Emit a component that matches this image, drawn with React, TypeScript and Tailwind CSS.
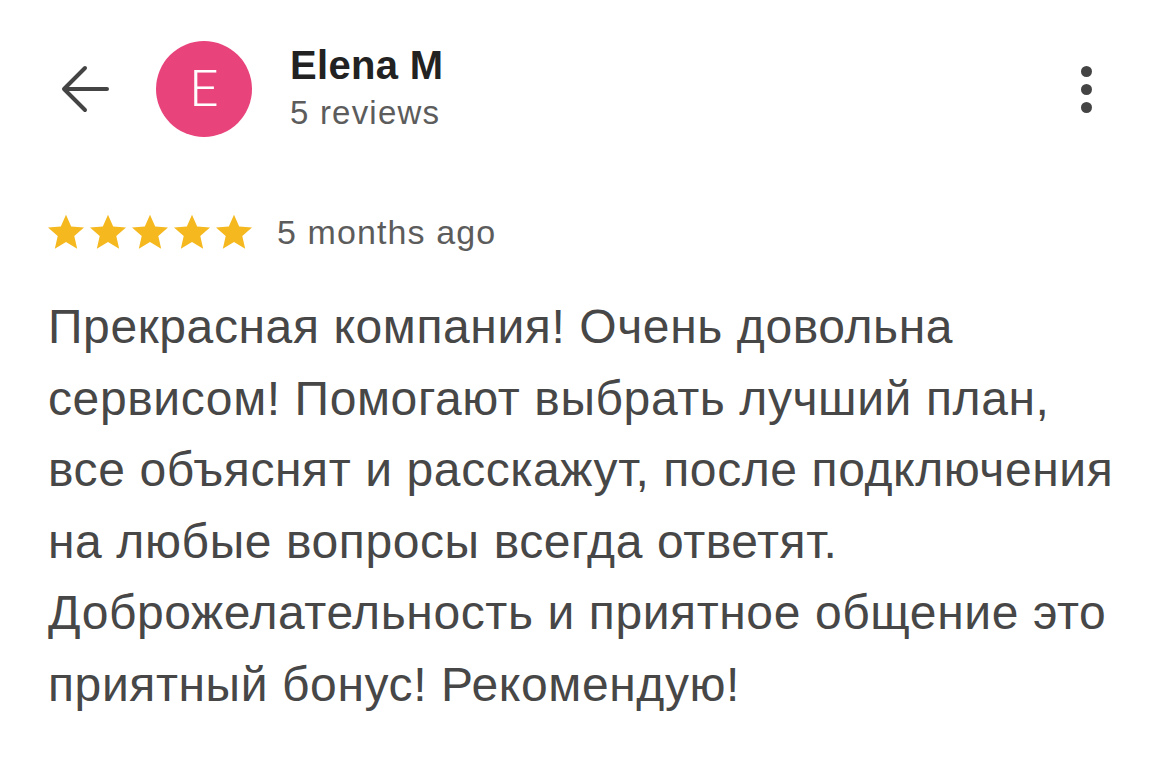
function Star() {
  return (
    <svg viewBox="2.4 2.4 19.2 18.4" className="w-[36px] h-[35px]">
      <path
        d="M12 2.6l2.76 6.3 6.84.62-5.18 4.52 1.54 6.7L12 17.2l-5.96 3.54 1.54-6.7L2.4 9.52l6.84-.62z"
        fill="#f5b81e"
      />
    </svg>
  );
}

function BackArrow() {
  return (
    <svg viewBox="0 0 48 48" className="w-[48px] h-[48px]" fill="none" stroke="#444444" strokeWidth={4} strokeLinecap="round" strokeLinejoin="round">
      <path d="M46 24H4M24 3L3 24l21 21" />
    </svg>
  );
}

export default function App() {
  const text =
    'Прекрасная компания! Очень довольна сервисом! Помогают выбрать лучший план, все объяснят и расскажут, после подключения на любые вопросы всегда ответят. Доброжелательность и приятное общение это приятный бонус! Рекомендую!';

  return (
    <div className="w-[1169px] h-[763px] bg-white font-['Liberation_Sans',Arial,sans-serif] overflow-hidden">
      {/* Header */}
      <div className="flex items-center h-[96px] mt-[41px] pl-[61px] pr-[77px]">
        <BackArrow />
        <div className="ml-[47px] w-[96px] h-[96px] rounded-full bg-[#e8437a] flex items-center justify-center">
          <span className="text-white text-[50px] font-['Roboto',sans-serif] font-light leading-none">E</span>
        </div>
        <div className="ml-[38px] self-start mt-[4px] flex flex-col">
          <span className="text-[40px] font-bold text-[#222222] leading-[40px] tracking-[0.3px]">Elena M</span>
          <span className="text-[33px] text-[#5c5c5c] leading-[56px] tracking-[1.2px]">5 reviews</span>
        </div>
        <div className="ml-auto flex flex-col gap-[7px]">
          <span className="w-[11px] h-[11px] rounded-full bg-[#444444]" />
          <span className="w-[11px] h-[11px] rounded-full bg-[#444444]" />
          <span className="w-[11px] h-[11px] rounded-full bg-[#444444]" />
        </div>
      </div>

      {/* Rating */}
      <div className="flex items-center mt-[77px] pl-[48px]">
        <div className="flex gap-[6px]">
          <Star />
          <Star />
          <Star />
          <Star />
          <Star />
        </div>
        <span className="ml-[25px] text-[34px] leading-none text-[#5c5c5c] tracking-[1.1px]">5 months ago</span>
      </div>

      {/* Body */}
      <p className="mt-[42px] ml-[48px] w-[1080px] text-[48px] leading-[71.5px] text-[#474747] tracking-[0.6px]">{text}</p>
    </div>
  );
}
